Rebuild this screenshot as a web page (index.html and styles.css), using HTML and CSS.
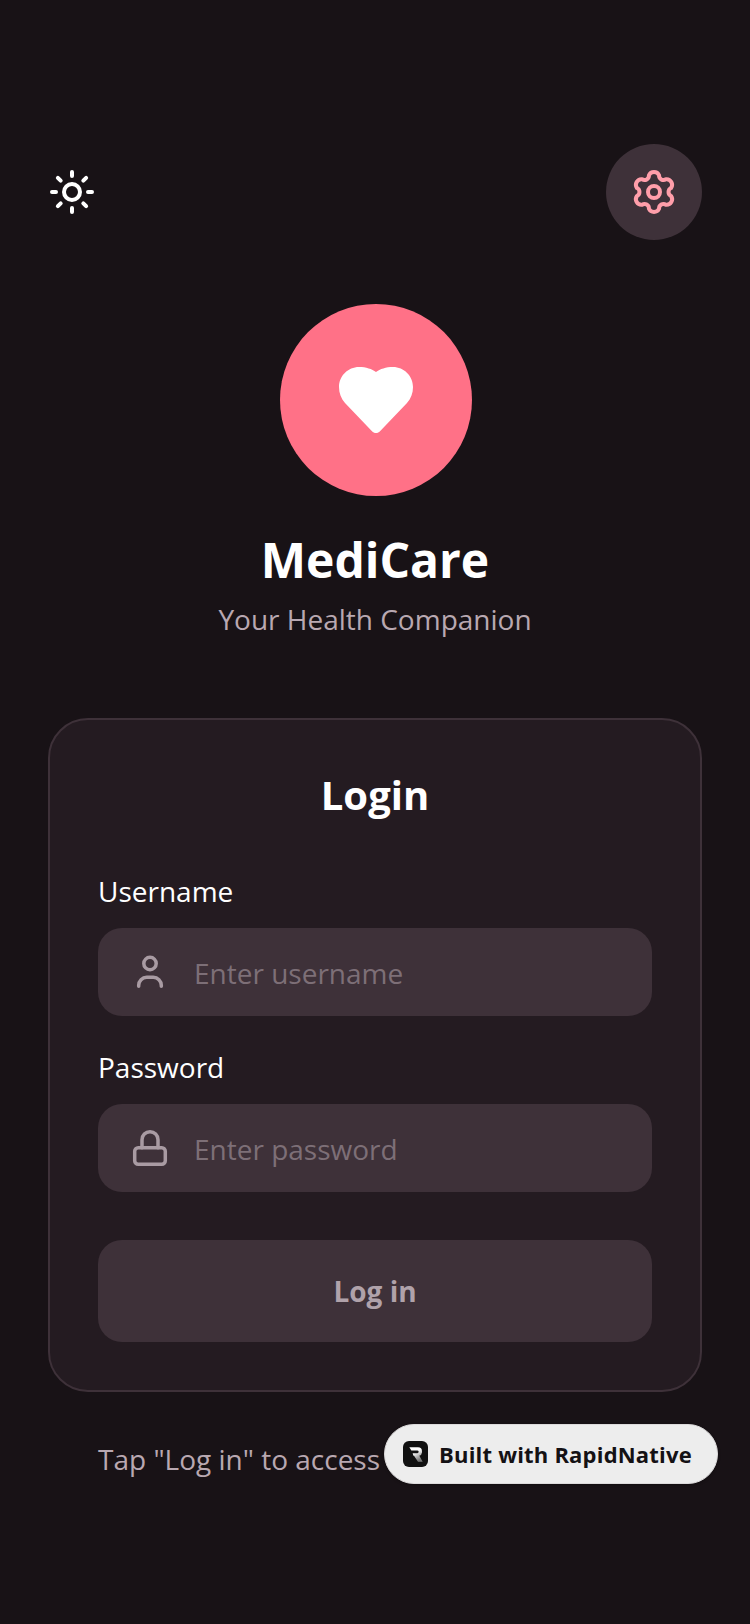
FILE: index.html
```html
<!DOCTYPE html>
<html lang="en">
<head>
  <meta charset="UTF-8" />
  <meta name="viewport" content="width=device-width, initial-scale=1.0"/>
  <title>MediCare - Login</title>
  <link rel="stylesheet" href="styles.css">
</head>
<body>
  <main class="screen">
    <header class="topbar">
      <button class="theme-btn" aria-label="Theme">
        <svg viewBox="0 0 24 24" width="48" height="48" fill="none" stroke="#fff" stroke-width="2" stroke-linecap="round" stroke-linejoin="round">
          <circle cx="12" cy="12" r="4"/>
          <path d="M12 2v2M12 20v2M4.93 4.93l1.41 1.41M17.66 17.66l1.41 1.41M2 12h2M20 12h2M6.34 17.66l-1.41 1.41M19.07 4.93l-1.41 1.41"/>
        </svg>
      </button>
      <button class="settings-btn" aria-label="Settings">
        <svg viewBox="0 0 24 24" width="48" height="48" fill="none" stroke="#ff9eaa" stroke-width="2" stroke-linecap="round" stroke-linejoin="round">
          <path d="M9.46 3.62A2.8 2.8 0 0 1 14.54 3.62A2.2 2.2 0 0 0 17.987 5.61A2.8 2.8 0 0 1 20.527 10.01A2.2 2.2 0 0 0 20.527 13.99A2.8 2.8 0 0 1 17.987 18.39A2.2 2.2 0 0 0 14.54 20.38A2.8 2.8 0 0 1 9.46 20.38A2.2 2.2 0 0 0 6.013 18.39A2.8 2.8 0 0 1 3.473 13.99A2.2 2.2 0 0 0 3.473 10.01A2.8 2.8 0 0 1 6.013 5.61A2.2 2.2 0 0 0 9.46 3.62z"/>
          <circle cx="12" cy="12" r="3"/>
        </svg>
      </button>
    </header>

    <section class="brand">
      <div class="logo">
        <svg viewBox="0 0 74 66" width="74" height="66" fill="#fff">
          <path d="M37 66c-1.500 0-3-.7-4-1.800L6 36C2 31.500 0 26 0 20 0 9 9 0 20 0c7 0 13 2 17 5 4-3 10-5 17-5 11 0 20 9 20 20 0 6-2 11.500-6 16L41 64.200c-1 1.100-2.500 1.800-4 1.800z"/>
        </svg>
      </div>
      <h1 class="brand-name">MediCare</h1>
      <p class="brand-tag">Your Health Companion</p>
    </section>

    <section class="card">
      <h2 class="card-title">Login</h2>

      <label class="field-label">Username</label>
      <div class="field">
        <svg viewBox="0 0 40 40" width="40" height="40" fill="none" stroke="#a99ba3" stroke-width="3.500" stroke-linecap="round" stroke-linejoin="round">
          <circle cx="20" cy="11.500" r="6.200"/>
          <path d="M8.700 34.300v-1a8 8 0 0 1 8-8h6.600a8 8 0 0 1 8 8v1"/>
        </svg>
        <span class="placeholder">Enter username</span>
      </div>

      <label class="field-label second">Password</label>
      <div class="field">
        <svg viewBox="0 0 40 40" width="40" height="40" fill="none" stroke="#a99ba3" stroke-width="3.500" stroke-linecap="round" stroke-linejoin="round">
          <rect x="4.700" y="19.700" width="30.600" height="16.600" rx="3.500"/>
          <path d="M12 19.700v-8a8 8 0 0 1 16 0v8"/>
        </svg>
        <span class="placeholder">Enter password</span>
      </div>

      <button class="login-btn">Log in</button>
    </section>

    <p class="hint">Tap "Log in" to access</p>
  </main>

  <div class="badge">
    <span class="badge-logo">
      <svg viewBox="0 0 24 24" width="16" height="17" fill="url(#badge-r)">
        <defs>
          <linearGradient id="badge-r" x1="0" y1="0" x2="0.500" y2="1">
            <stop offset="0.450" stop-color="#fff"/>
            <stop offset="1" stop-color="#777"/>
          </linearGradient>
        </defs>
        <path d="M2 1h13a6 6 0 0 1 6 6v2a6 6 0 0 1-4 5l5 9h-7l-6-9H8l-1-4h7a2 2 0 0 0 0-4H5z"/>
      </svg>
    </span>
    <span class="badge-text">Built with RapidNative</span>
  </div>
</body>
</html>
```

FILE: styles.css
```css
* {
  box-sizing: border-box;
}

body {
  margin: 0;
  background-color: #181216;
  font-family: "Open Sans", sans-serif;
  color: #fff;
}

.screen {
  position: relative;
  width: 750px;
  height: 1624px;
  padding: 144px 48px 0;
  overflow: hidden;
}

.topbar {
  display: flex;
  justify-content: space-between;
  align-items: center;
}

.theme-btn {
  width: 48px;
  height: 48px;
  padding: 0;
  border: none;
  background: none;
}

.settings-btn {
  display: flex;
  align-items: center;
  justify-content: center;
  width: 96px;
  height: 96px;
  padding: 0;
  border: none;
  border-radius: 50%;
  background: #3e3139;
}

.brand {
  display: flex;
  flex-direction: column;
  align-items: center;
  margin-top: 64px;
}

.logo {
  display: flex;
  align-items: center;
  justify-content: center;
  width: 192px;
  height: 192px;
  margin-left: 2px;
  border-radius: 50%;
  background: #ff7187;
}

.brand-name {
  margin: 28px 0 0;
  font-size: 48px;
  line-height: 72px;
  font-weight: 700;
}

.brand-tag {
  margin: 3px 0 0;
  font-size: 28px;
  line-height: 40px;
  color: #b9a8b1;
}

.card {
  margin-top: 79px;
  height: 674px;
  padding: 47px 48px 48px;
  border: 2px solid #3e3139;
  border-radius: 40px;
  background: #241b21;
}

.card-title {
  margin: 0 0 48px;
  font-size: 40px;
  line-height: 56px;
  font-weight: 700;
  text-align: center;
}

.field-label {
  display: block;
  margin-bottom: 17px;
  font-size: 28px;
  line-height: 40px;
}

.field-label.second {
  margin-top: 31px;
}

.field {
  display: flex;
  align-items: center;
  gap: 24px;
  height: 88px;
  padding-left: 32px;
  border-radius: 24px;
  background: #3e3139;
}

.placeholder {
  padding-top: 2px;
  font-size: 28px;
  color: #7d6f77;
}

.login-btn {
  display: block;
  width: 100%;
  height: 102px;
  margin-top: 48px;
  border: none;
  border-radius: 24px;
  background: #3e3139;
  color: #b0a2aa;
  font-family: inherit;
  font-size: 28px;
  font-weight: 700;
}

.hint {
  margin: 47px 0 0;
  padding: 0 50px;
  font-size: 28px;
  line-height: 40px;
  color: #b9a8b1;
}

.badge {
  position: absolute;
  left: 384px;
  top: 1424px;
  display: flex;
  align-items: center;
  gap: 11px;
  width: 334px;
  height: 60px;
  padding-left: 18px;
  border: 1px solid #dcdadb;
  border-radius: 30px;
  background: #ededed;
  box-shadow: 0 1px 3px rgba(0,0,0,0.3);
}

.badge-logo {
  display: flex;
  align-items: center;
  justify-content: center;
  width: 25px;
  height: 26px;
  border-radius: 6px;
  background: #111;
}

.badge-text {
  font-size: 22px;
  font-weight: 700;
  letter-spacing: 0.2px;
  color: #141114;
}
```
